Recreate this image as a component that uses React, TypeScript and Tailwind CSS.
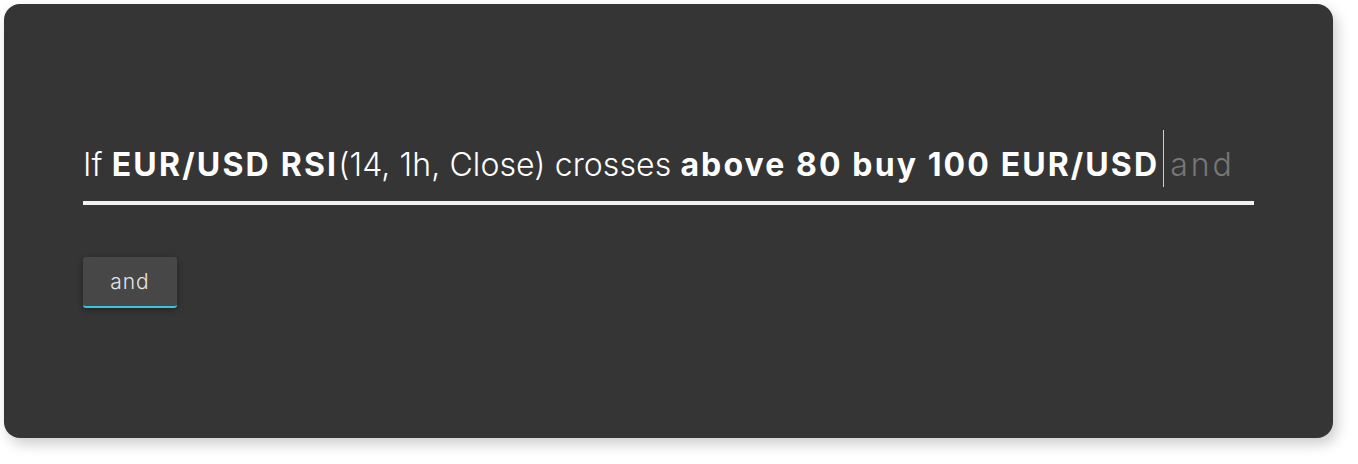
export default function App() {
  return (
    <div className="w-[1358px] h-[464px] bg-white" style={{ fontFamily: "Inter, 'Noto Sans', sans-serif" }}>
      <div className="flex pt-[4px] pl-[4px]">
        <div className="w-[1329px] h-[434px] rounded-[16px] bg-[#353535] shadow-[4px_6px_14px_rgba(0,0,0,0.2)] px-[79px] pt-[126px] flex flex-col">
          <div className="flex items-center h-[57px] text-[32px] text-white whitespace-nowrap">
            <span className="translate-y-[6px]">
              <span className="font-light tracking-[0.1px]">If </span>
              <span className="font-bold tracking-[2.2px]">EUR/USD RSI</span>
              <span className="font-light tracking-[0.1px]">(14, 1h, Close) crosses </span>
              <span className="font-bold tracking-[2.1px]">above 80 buy 100 EUR/USD</span>
            </span>
            <span className="h-[57px] w-px bg-[#cfcfcf] ml-[4px]"></span>
            <span className="font-light tracking-[3px] text-[#777777] ml-[6px] translate-y-[6px]">and</span>
          </div>
          <div className="mt-[14px] h-[4px] bg-[#f2f2f2]"></div>
          <div className="mt-[52px] flex">
            <div className="w-[94px] h-[51px] rounded-[3px] bg-[#474747] border-b-2 border-[#3cc3dd] shadow-[0_2px_6px_rgba(0,0,0,0.35)] flex items-center justify-center text-[21px] tracking-[1px] font-light text-[#e4e4e4]">
              and
            </div>
          </div>
        </div>
      </div>
    </div>
  );
}
